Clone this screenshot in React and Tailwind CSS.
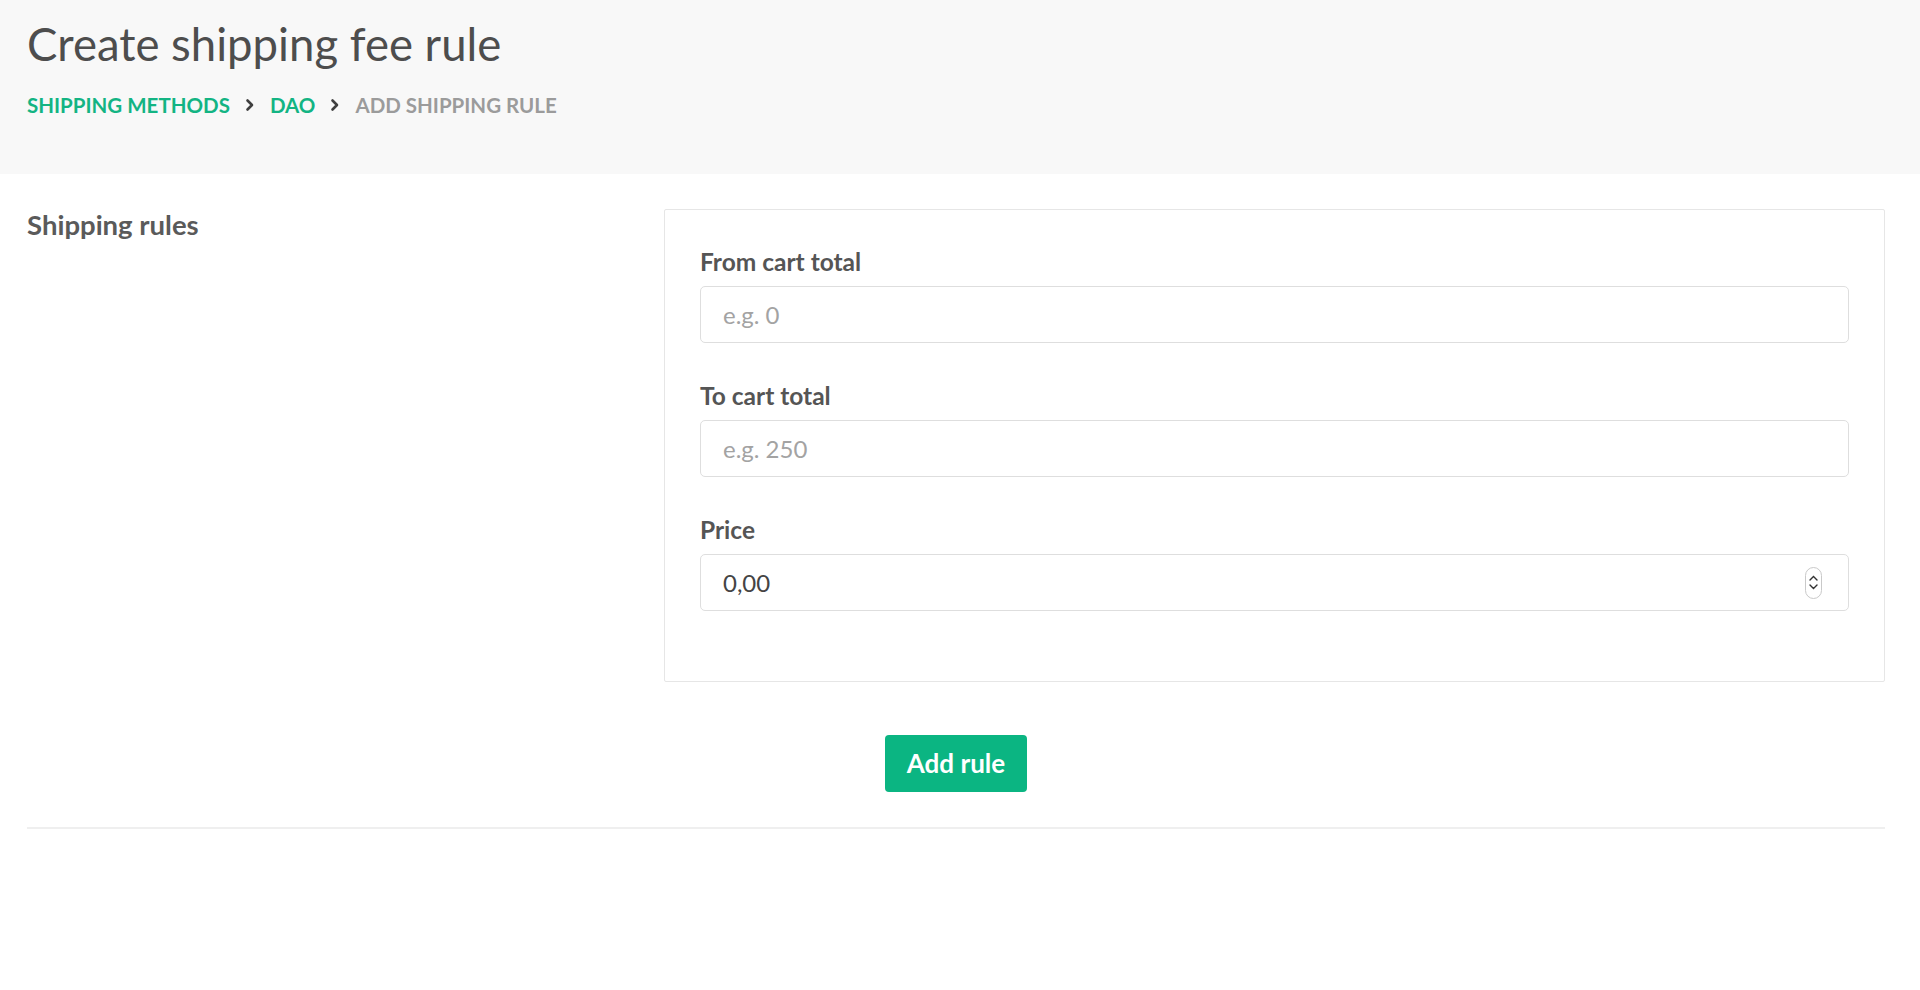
import React from "react";

const FONT = { fontFamily: "Lato, 'Open Sans', 'Liberation Sans', sans-serif" };

function Chevron() {
  return (
    <svg width="10" height="14" viewBox="0 0 10 14" className="mx-[15px]" aria-hidden="true">
      <path d="M2.5 2.5 L7 7 L2.5 11.5" fill="none" stroke="#3f3f3f" strokeWidth="2.6" strokeLinecap="round" strokeLinejoin="round" />
    </svg>
  );
}

function Spinner() {
  return (
    <span className="flex h-[32px] w-[17px] flex-col items-center justify-center gap-[3px] rounded-full border border-[#c9c9c9] bg-white">
      <svg width="9" height="6" viewBox="0 0 9 6">
        <path d="M1 5 L4.5 1.5 L8 5" fill="none" stroke="#333" strokeWidth="1.4" strokeLinecap="round" />
      </svg>
      <svg width="9" height="6" viewBox="0 0 9 6">
        <path d="M1 1 L4.5 4.5 L8 1" fill="none" stroke="#333" strokeWidth="1.4" strokeLinecap="round" />
      </svg>
    </span>
  );
}

function Field({ label, placeholder, value, number, last }) {
  return (
    <div className={last ? "" : "mb-[41px]"}>
      <label className="mb-[12px] block text-[24.5px] font-bold leading-[24px] text-[#555]">{label}</label>
      <div className="flex h-[57px] items-center rounded-[5px] border border-[#dedede] bg-white pl-[22px] pr-[26px]">
        <input
          type="text"
          readOnly
          defaultValue={value}
          placeholder={placeholder}
          className="h-full min-w-0 flex-1 bg-transparent text-[24px] text-[#444] outline-none placeholder:text-[#a3a3a3]"
          style={FONT}
        />
        {number && <Spinner />}
      </div>
    </div>
  );
}

export default function App() {
  return (
    <div className="min-h-screen bg-white" style={FONT}>
      <header className="h-[174px] bg-[#f8f8f8] pl-[27px] pr-[35px] pt-[17px]">
        <h1 className="text-[45.5px] font-normal leading-[54px] text-[#4d4d4d]">Create shipping fee rule</h1>
        <nav className="mt-[21px] flex items-center text-[20.5px] font-bold uppercase leading-[26px]">
          <a className="text-[#13b483]">Shipping methods</a>
          <Chevron />
          <a className="text-[#13b483]">DAO</a>
          <Chevron />
          <span className="text-[#9b9b9b]">Add shipping rule</span>
        </nav>
      </header>

      <main className="pl-[27px] pr-[35px] pt-[35px]">
        <div className="grid grid-cols-[637px_1fr]">
          <h2 className="pt-[2px] text-[27.5px] font-bold leading-[28px] text-[#5a5a5a]">Shipping rules</h2>
          <section className="rounded-[2px] border border-[#e6e6e6] px-[35px] pb-[70px] pt-[40px]">
            <Field label="From cart total" placeholder="e.g. 0" />
            <Field label="To cart total" placeholder="e.g. 250" />
            <Field label="Price" value="0,00" number last />
          </section>
        </div>

        <div className="mt-[53px] pl-[858px]">
          <button className="h-[57px] w-[142px] rounded-[4px] bg-[#0bb582] text-[26px] font-bold text-white" style={FONT}>
            Add rule
          </button>
        </div>

        <hr className="mt-[35px] border-t-2 border-[#efefef]" />
      </main>
    </div>
  );
}
